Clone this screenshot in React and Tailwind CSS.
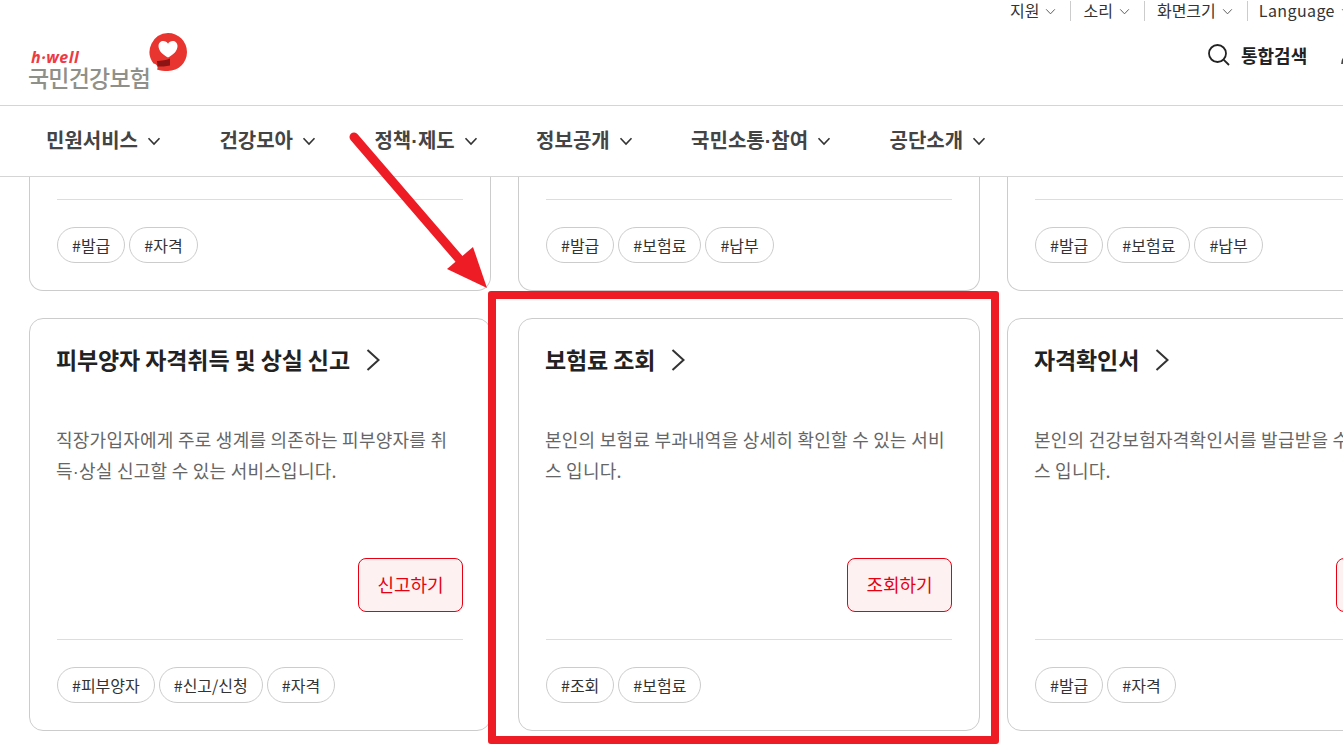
import React from "react";

const FONT = "font-['Noto_Sans_CJK_KR','Noto_Sans',sans-serif]";

const Dot = () => <span className="font-['Liberation_Sans',sans-serif]">·</span>;

const Chevron = ({ className = "", size = 14, sw = 1.6 }) => (
  <svg width={size} height={size} viewBox="0 0 14 14" fill="none" stroke="currentColor" strokeWidth={sw} className={className}>
    <path d="M1.5 4.2 L7 10 L12.5 4.2" />
  </svg>
);

const Tag = ({ children }) => (
  <span className="h-[36px] flex items-center rounded-full border border-[#cccccc] px-[14px] text-[16px] text-[#333333] whitespace-nowrap">
    {children}
  </span>
);

const TopCard = ({ tags }) => (
  <div className="h-[114px] rounded-b-[14px] border border-t-0 border-[#cccccc] px-[27px] pt-[22px] bg-white">
    <div className="border-t border-[#dddddd] pt-[27px] flex gap-[4px]">
      {tags.map((t) => <Tag key={t}>{t}</Tag>)}
    </div>
  </div>
);

const Card = ({ title, desc, btn, tags }) => (
  <div className="h-[413px] rounded-[14px] border border-[#cccccc] px-[27px] flex flex-col bg-white">
    <div className="mt-[23px] h-[34px] flex items-center gap-[16px] -ml-[1px]">
      <span className="text-[23px] leading-[34px] font-bold tracking-[-0.12px] text-[#222222] whitespace-nowrap">{title}</span>
      <svg width="14" height="22" viewBox="0 0 14 22" fill="none" stroke="#333333" strokeWidth="2" className="mt-[1px]">
        <path d="M1.5 1 L12.5 11 L1.5 21" />
      </svg>
    </div>
    <p className="mt-[48px] text-[18px] leading-[31px] tracking-[0.25px] text-[#666666] h-[100px] -ml-[1px] whitespace-nowrap">{desc}</p>
    <div className="mt-[34px] flex justify-end h-[54px]">
      <span className="w-[105px] h-[54px] rounded-[8px] border border-[#e60012] bg-[#fdf1f1] text-[#e60012] text-[18px] leading-[50px] pb-[2px] flex items-center justify-center whitespace-nowrap">
        {btn}
      </span>
    </div>
    <div className="mt-[27px] border-t border-[#dddddd] pt-[27px] flex gap-[4px]">
      {tags.map((t) => <Tag key={t}>{t}</Tag>)}
    </div>
  </div>
);

const MainNav = ({ label }) => (
  <div className="flex items-center gap-[9px] mr-[58.4px]">
    <span className="text-[20px] leading-[28px] font-bold text-[#444444] whitespace-nowrap -mt-[2px]">{label}</span>
    <Chevron className="text-[#333333]" />
  </div>
);

const Util = ({ label, last }) => (
  <div className={`flex items-center gap-[6px] h-[20px] pr-[14px] mr-[12px] ${last ? "" : "border-r border-[#cccccc]"}`}>
    <span className={`text-[16px] leading-[20px] text-[#333333] whitespace-nowrap -mt-[2px] ${last ? "tracking-[0.4px] -ml-[1px]" : ""}`}>{label}</span>
    <Chevron size={11} sw={1.2} className="text-[#555555]" />
  </div>
);

export default function App() {
  return (
    <div className={`relative w-[1343px] h-[750px] overflow-hidden bg-white ${FONT}`}>
      <header className="h-[106px] border-b border-[#d5d5d5] overflow-hidden">
        <div className="h-[22px] flex justify-start pl-[1010px] pt-[1px]">
          <Util label="지원" />
          <Util label="소리" />
          <Util label="화면크기" />
          <Util label="Language" last />
        </div>
        <div className="flex items-start">
          <div className="relative ml-[28px] mt-[10px] w-[165px] h-[60px] shrink-0">
            <div className="absolute left-[3px] top-[17px] text-[16px] leading-[16px] font-bold italic tracking-[0.5px] text-[#ee3a43] font-['Open_Sans',sans-serif]">h·well</div>
            <div className="absolute left-0 top-[31px] text-[23px] leading-[28px] font-medium text-[#8f9089] tracking-[-0.8px] whitespace-nowrap">국민건강보험</div>
            <svg className="absolute left-[120px] top-[1px]" width="40" height="38" viewBox="0 0 40 38">
              <path d="M20 0 A19 19 0 1 1 20 38 C16 38 12 37.5 9 36.5 C10.5 34 9 31 5.5 30.5 A19 19 0 0 1 20 0Z" fill="#e8352f" />
              <path d="M9 28 C13 28 19 27 22 25.5 L22 32.5 C18 33.5 13 33.5 9.5 33.5Z" fill="#8c1414" />
              <path d="M20 24.5 C15 22 10.5 18 10.5 13 C10.5 10 12.7 8 15.3 8 C17.3 8 19 9 20 10.8 C21 9 22.7 8 24.7 8 C27.3 8 29.5 10 29.5 13 C29.5 18 25 22 20 24.5Z" fill="#ffffff" />
            </svg>
          </div>
          <div className="flex items-center ml-[1014px] mt-[21px] gap-[10px] shrink-0">
            <svg width="24" height="24" viewBox="0 0 24 24" fill="none" stroke="#222222" strokeWidth="1.8">
              <circle cx="10.5" cy="10.5" r="8.5" />
              <path d="M16.8 16.8 L22 22" />
            </svg>
            <span className="text-[18px] leading-[24px] font-bold text-[#222222] whitespace-nowrap -mt-[1px]">통합검색</span>
            <svg width="24" height="24" viewBox="0 0 24 24" fill="none" stroke="#444444" strokeWidth="1.8" className="ml-[23px] shrink-0">
              <circle cx="12" cy="6" r="5" />
              <path d="M2 21 C2 15 6 12.5 12 12.5 C18 12.5 22 15 22 21" />
            </svg>
          </div>
        </div>
      </header>

      <nav className="h-[71px] border-b border-[#d5d5d5] flex items-center pl-[46px]">
        <MainNav label="민원서비스" />
        <MainNav label="건강모아" />
        <MainNav label={<>정책<Dot />제도</>} />
        <MainNav label="정보공개" />
        <MainNav label={<>국민소통<Dot />참여</>} />
        <MainNav label="공단소개" />
      </nav>

      <main className="pl-[29px] grid grid-cols-[462px_462px_462px] gap-x-[27px] gap-y-[27px]">
        <TopCard tags={["#발급", "#자격"]} />
        <TopCard tags={["#발급", "#보험료", "#납부"]} />
        <TopCard tags={["#발급", "#보험료", "#납부"]} />
        <Card
          title="피부양자 자격취득 및 상실 신고"
          desc={<>직장가입자에게 주로 생계를 의존하는 피부양자를 취<br />득<Dot />상실 신고할 수 있는 서비스입니다.</>}
          btn="신고하기"
          tags={["#피부양자", "#신고/신청", "#자격"]}
        />
        <Card
          title="보험료 조회"
          desc={<>본인의 보험료 부과내역을 상세히 확인할 수 있는 서비<br />스 입니다.</>}
          btn="조회하기"
          tags={["#조회", "#보험료"]}
        />
        <Card
          title="자격확인서"
          desc={<>본인의 건강보험자격확인서를 발급받을 수 있는 서비<br />스 입니다.</>}
          btn="발급하기"
          tags={["#발급", "#자격"]}
        />
      </main>

      {/* annotation overlay */}
      <div className="absolute left-[488px] top-[291px] w-[511px] h-[453px] border-[8px] border-[#ee1c25] rounded-[3px]" />
      <svg className="absolute left-0 top-0 pointer-events-none" width="1343" height="750" viewBox="0 0 1343 750">
        <path d="M354 137 L466 267" stroke="#ee1c25" strokeWidth="9" strokeLinecap="round" fill="none" />
        <path d="M487 288 L447 269 L473 247Z" fill="#ee1c25" />
      </svg>
    </div>
  );
}
